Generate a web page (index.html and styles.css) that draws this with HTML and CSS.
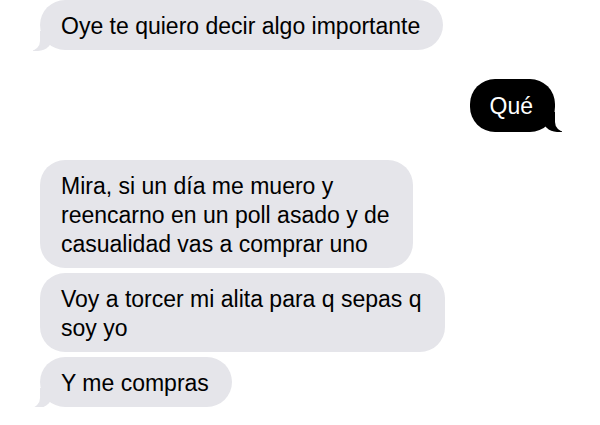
FILE: index.html
```html
<!DOCTYPE html>
<html lang="es">
<head>
<meta charset="UTF-8">
<meta name="viewport" content="width=device-width, initial-scale=1.0">
<title>Mensajes</title>
<link rel="stylesheet" href="styles.css">
</head>
<body>
  <div class="thread">
    <div class="bubble them tail">Oye te quiero decir algo importante</div>
    <div class="bubble me tail">Qué</div>
    <div class="bubble them">Mira, si un día me muero y<br>reencarno en un poll asado y de<br>casualidad vas a comprar uno</div>
    <div class="bubble them">Voy a torcer mi alita para q sepas q<br>soy yo</div>
    <div class="bubble them tail">Y me compras</div>
  </div>
</body>
</html>
```

FILE: styles.css
```css
body {
  margin: 0;
  background: #fff;
  font-family: 'Liberation Sans', Arial, sans-serif;
}
.thread {
  display: flex;
  flex-direction: column;
  align-items: flex-start;
  padding: 0 45px 0 40px;
}
.bubble {
  position: relative;
  padding: 12px 23px 9px 21px;
  font-size: 23px;
  line-height: 29px;
  border-radius: 25px;
  background: #e5e5ea;
  color: #000;
}
.bubble + .bubble {
  margin-top: 5px;
}
.me {
  align-self: flex-end;
  margin: 29px 0 23px !important;
  padding: 13px 22px 11px 20px;
  background: #000;
  color: #fff;
}
/* tails */
.them.tail::before {
  content: "";
  position: absolute;
  bottom: -1px;
  left: -7px;
  width: 20px;
  height: 20px;
  background: #e5e5ea;
  border-bottom-right-radius: 15px;
}
.them.tail::after {
  content: "";
  position: absolute;
  bottom: -1px;
  left: -10px;
  width: 10px;
  height: 21px;
  background: #fff;
  border-bottom-right-radius: 10px;
}
.me.tail::before {
  content: "";
  position: absolute;
  bottom: 0;
  right: -7px;
  width: 20px;
  height: 20px;
  background: #000;
  border-bottom-left-radius: 15px;
}
.me.tail::after {
  content: "";
  position: absolute;
  bottom: 0;
  right: -10px;
  width: 10px;
  height: 20px;
  background: #fff;
  border-bottom-left-radius: 10px;
}
```
